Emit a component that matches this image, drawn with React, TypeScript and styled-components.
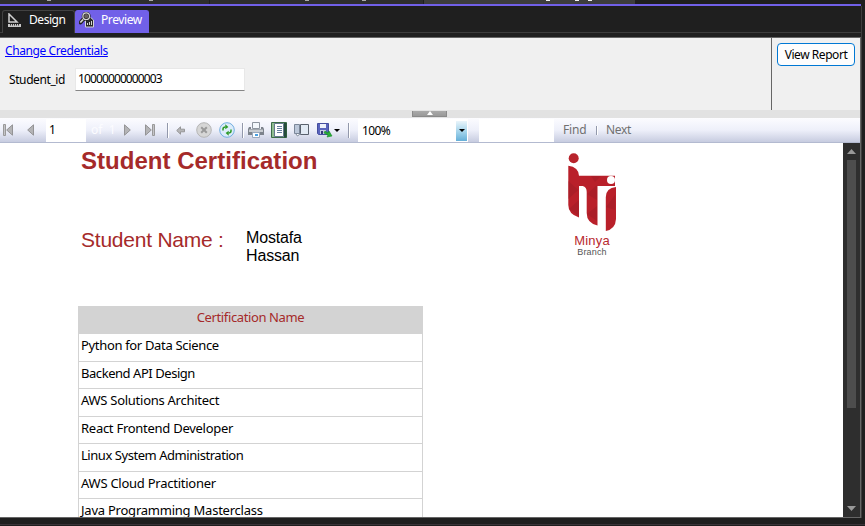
import React from "react";
import styled, { createGlobalStyle } from "styled-components";

const Global = createGlobalStyle`
  *{box-sizing:border-box}
  body{margin:0;background:#1f1f1f;overflow:hidden}
`;
const ui = '"Noto Sans", "Open Sans", sans-serif';
const report = '"Liberation Sans", Arial, sans-serif';

const Window = styled.div`
  width:865px;height:526px;display:flex;flex-direction:column;overflow:hidden;
  background:#1f1f1f;font:12px/16px ${ui};color:#000;
`;
const DocTabs = styled.div`height:4px;display:flex;gap:1px;background:#1f1f1f;flex:none;`;
const DocTab = styled.div<{ $w: number; $active?: boolean }>`
  width:${p => p.$w}px;height:4px;display:flex;background:${p => (p.$active ? "#3d3d3d" : "#2e2e2e")};
`;
const Descender = styled.i<{ $gap: number; $bright?: boolean }>`
  width:4px;height:1px;margin-left:${p => p.$gap}px;background:${p => (p.$bright ? "#f0f0f0" : "#aaa")};
`;
const Accent = styled.div`width:861px;height:2px;background:#7160e8;flex:none;`;
const Designer = styled.div`
  width:862px;height:512px;border-right:1px solid #3d3d3d;display:flex;flex-direction:column;flex:none;
`;
const ViewTabs = styled.div`
  height:27px;padding:4px 0 0 2px;display:flex;border-bottom:1px solid #3d3d3d;flex:none;
`;
const ViewTab = styled.div<{ $w: number; $active?: boolean }>`
  width:${p => p.$w}px;height:23px;display:flex;align-items:flex-start;padding:${p => (p.$active ? "1px 0 0 4px" : "2px 0 0 5px")};
  border:1px solid ${p => (p.$active ? "#7160e8" : "#424242")};border-bottom:0;border-left-width:${p => (p.$active ? 0 : 1)}px;
  border-radius:3px 3px 0 0;background:${p => (p.$active ? "#7160e8" : "#1f1f1f")};color:#fff;
`;
const Label = styled.span<{ $ml?: number; $mt?: number; $ls?: number; $c?: string }>`
  white-space:pre;margin-left:${p => p.$ml || 0}px;margin-top:${p => p.$mt || 0}px;
  letter-spacing:${p => p.$ls || 0}px;color:${p => p.$c || "inherit"};
`;
const Viewer = styled.div`
  margin-top:4px;width:861px;height:481px;border:1px solid #666;border-left:0;display:flex;flex-direction:column;background:#fff;flex:none;
`;
const Params = styled.div`height:72px;display:flex;background:#f0f0f0;flex:none;`;
const Fields = styled.div`width:772px;border-right:1px solid #666;padding:5px 0 0 5px;`;
const Credentials = styled.a`display:block;width:max-content;height:16px;color:#00f;text-decoration:underline;letter-spacing:-.4px;text-underline-offset:1px;`;
const Field = styled.div`display:flex;margin-top:9px;padding-left:4px;`;
const FieldName = styled.span`width:66px;padding-top:4px;letter-spacing:-.4px;`;
const Input = styled.div`
  width:170px;height:23px;background:#fff;border:1px solid #e8e8e8;border-bottom-color:#868686;padding:2px 0 0 2px;letter-spacing:-.88px;
`;
const Run = styled.div`padding:5px;`;
const Button = styled.button`
  width:78px;height:23px;padding:0;border:1px solid #0078d4;border-radius:4px;background:#fdfdfd;
  font:12px/18px ${ui};letter-spacing:-.45px;white-space:nowrap;color:#000;
`;
const Splitter = styled.div`height:8px;background:#e2e2e2;padding:1px 0 0 412px;flex:none;`;
const Grip = styled.div`
  width:35px;height:6px;background:linear-gradient(#aaa,#999);border:solid #8a8a8a;border-width:0 1px 1px;display:flex;justify-content:center;
`;
const Toolbar = styled.div`
  height:25px;display:flex;align-items:center;flex:none;border-bottom:1px solid #b3bad0;
  background:linear-gradient(#fcfcff 0%,#eef0fa 50%,#c7cce0 100%);
`;
const Slot = styled.div<{ $w: number; $gap?: number }>`
  width:${p => p.$w}px;margin-left:${p => p.$gap || 0}px;flex:none;display:flex;white-space:pre;
`;
const Box = styled(Slot)`height:23px;background:#fff;padding:3px 0 0 3px;`;
const Divider = styled.i<{ $gap: number; $h?: number }>`
  width:2px;height:${p => p.$h || 15}px;margin-left:${p => p.$gap}px;background:linear-gradient(90deg,#9298ab 50%,#fff 50%);flex:none;
`;
const Combo = styled(Slot)`height:23px;background:#fff;padding:4px 1px 1px 4px;justify-content:space-between;`;
const Drop = styled.div`
  width:11px;height:20px;margin-top:-2px;background:linear-gradient(#eaf5fb,#9bcfe9 60%,#65afd8);display:flex;align-items:center;justify-content:center;
`;
const Body = styled.div`display:flex;flex:1;min-height:0;`;
const Page = styled.div`width:843px;height:374px;overflow:hidden;background:#fff;padding-left:78px;`;
const Head = styled.div`height:163px;display:flex;justify-content:space-between;padding:0 224px 0 3px;`;
const Titles = styled.div`font-family:${report};color:#a52a2a;`;
const Title = styled.h1`margin:4px 0 0;font-size:24px;line-height:28px;white-space:nowrap;letter-spacing:.02px;`;
const Student = styled.div`display:flex;margin-top:52px;font-size:21px;line-height:26px;`;
const StudentLabel = styled.span`width:165px;letter-spacing:-.23px;white-space:nowrap;`;
const StudentName = styled.span`width:80px;font-size:16px;line-height:18px;letter-spacing:-.15px;color:#000;padding-top:2px;`;
const Brand = styled.div`width:54px;display:flex;flex-direction:column;align-items:center;padding-top:9px;`;
const BrandName = styled.div`font:13px/13px ${report};letter-spacing:.2px;color:#b8292f;margin-top:2px;`;
const BrandSub = styled.div`font:9px/11px ${report};letter-spacing:.15px;color:#555;`;
const Table = styled.div`width:345px;border:1px solid #d3d3d3;border-top:0;font-size:13px;`;
const TableHead = styled.div`
  height:28px;background:#d3d3d3;color:#a52a2a;text-align:center;padding-top:2px;line-height:18px;letter-spacing:-.38px;
`;
const Row = styled.div<{ $h: number; $ls: number }>`
  height:${p => p.$h}px;border-bottom:1px solid #d3d3d3;padding:2px 0 0 2px;line-height:18px;letter-spacing:${p => p.$ls}px;white-space:nowrap;
`;
const Scroll = styled.div`
  width:17px;background:#2e2e2e;display:flex;flex-direction:column;align-items:center;flex:none;padding:6px 0;
`;
const Thumb = styled.div`width:9px;height:248px;background:#4d4d4d;margin-top:6px;`;
const Spacer = styled.div`flex:1;`;
const StatusLine = styled.div`height:1px;margin-top:6px;background:#3a3338;flex:none;`;

const Tri = ({ dir, fill = "#999", w, h }: { dir: "l" | "r" | "u" | "d"; fill?: string; w: number; h: number }) => {
  const points = {
    l: `${w},0 0,${h / 2} ${w},${h}`, r: `0,0 ${w},${h / 2} 0,${h}`,
    u: `0,${h} ${w / 2},0 ${w},${h}`, d: `0,0 ${w},0 ${w / 2},${h}`,
  }[dir];
  return <svg width={w} height={h}><polygon points={points} fill={fill} /></svg>;
};

const NavIcon = ({ flip, bar }: { flip?: boolean; bar?: boolean }) => (
  <svg width={bar ? 10 : 7} height="12" viewBox={bar ? "0 0 10 12" : "3 0 7 12"}>
    <g transform={flip ? (bar ? "translate(10 0) scale(-1 1)" : "translate(13 0) scale(-1 1)") : undefined}>
      {bar && <path d="M.5.5h2v11h-2z" fill="#c4c4c8" stroke="#999" />}
      <path d="M9.5.8v10.4L3.7 6z" fill="#b4b4b6" stroke="#949496" />
    </g>
  </svg>
);
const DesignIcon = () => (
  <svg width="13" height="15" viewBox="0 0 13 15" fill="none">
    <path d="M1 1v8h8z" stroke="#d0d0d0" strokeWidth="1.5" />
    <path d="M3 5.5v2h2z" fill="#1f1f1f" />
    <path d="M0 11h13v3H0z" fill="#c8c8c8" />
    <path d="M2.5 11v1.5m2-1.5v1.5m2-1.5v1.5m2-1.5v1.5m2-1.5v1.5" stroke="#333" />
  </svg>
);
const PreviewIcon = () => (
  <svg width="16" height="16" viewBox="0 0 16 16" fill="none">
    <path d="M6.5 5.5h5.2L14.5 8v7h-8z" fill="#292929" stroke="#d4d4d4" />
    <path d="M8.5 13v-2m2 2v-3m2 3V9" stroke="#d4d4d4" />
    <path d="M5 6.5 1.5 10.5" stroke="#222" strokeWidth="4" strokeLinecap="round" />
    <path d="M5 6.5 1.3 10.5" stroke="#d4d4d4" strokeWidth="1.8" />
    <circle cx="7.2" cy="4.2" r="3.3" fill="#68615e" stroke="#222" strokeWidth="2.4" />
    <circle cx="7.2" cy="4.2" r="3.3" stroke="#d4d4d4" strokeWidth="1.2" />
  </svg>
);
const BackIcon = () => (
  <svg width="9" height="9"><path d="M.7 4.5 4.5.8v2.4h4v2.6h-4v2.4z" fill="#b5b5b7" stroke="#969698" /></svg>
);
const StopIcon = () => (
  <svg width="16" height="16" fill="none">
    <circle cx="8" cy="8" r="7.3" fill="#d6d6d6" stroke="#b5b5b5" />
    <path d="m5.2 5.2 5.6 5.6m0-5.6-5.6 5.6" stroke="#999" strokeWidth="2" />
  </svg>
);
const RefreshIcon = () => (
  <svg width="16" height="16" fill="none">
    <circle cx="8" cy="8" r="7.3" fill="#dcecfa" stroke="#72aee0" />
    <path d="M4 8.5V7Q4 5 6.5 5M12 7.5V9Q12 11 9.5 11" stroke="#2d9a27" strokeWidth="1.5" />
    <path d="M6.3 2.3v5L9.4 5zM9.7 8.7v5L6.6 11z" fill="#2d9a27" />
  </svg>
);
const PrintIcon = () => (
  <svg width="16" height="16">
    <path d="M4.5.5h7v6h-7z" fill="#f3f7fc" stroke="#8d949f" />
    <path d="M1 5h2v2h10V5h2l1 2v6H0V7z" fill="#7d838c" />
    <path d="M1 7.5h14V10H1z" fill="#c9cdd2" />
    <path d="M4.5 10.5h7v5h-7z" fill="#fff" stroke="#9baabd" />
    <path d="M7 12h3v2H7z" fill="#4a9fe0" />
  </svg>
);
const LayoutIcon = () => (
  <svg width="16" height="16">
    <path d="M.5.5h15v15H.5z" fill="#8fbd90" stroke="#3b6c47" />
    <path d="M13 1h2.5v14.5H13z" fill="#244c39" />
    <path d="M3.5 1.5h9v13h-9z" fill="#fff" stroke="#65798d" />
    <path d="M6 4.5h5m-5 2h5m-5 2h5m-5 2h5" stroke="#66809e" />
  </svg>
);
const SetupIcon = () => (
  <svg width="16" height="14">
    <path d="M.5 1.5h5v9h-5z" fill="#bcc8da" stroke="#7b8798" />
    <path d="M6.5 1.5h8v10h-8z" fill="#e2eaf4" stroke="#59616d" />
    <path d="m1.5 10.5 2 2.5 3-2.5z" fill="#fff" stroke="#7b8798" />
  </svg>
);
const SaveIcon = () => (
  <svg width="16" height="16">
    <path d="M.5 1.5h11v11h-10l-1-1z" fill="#5964bd" stroke="#454e9e" />
    <path d="M3 2h6v4H3z" fill="#edf1fb" />
    <path d="M3 8h6v4H3z" fill="#c5cae2" /><path d="M4 9h2v3H4z" fill="#313978" />
    <path d="m8 9 3 2 1-2 3 5-5 1 1-2-4-2z" fill="#29ae35" stroke="#168b28" strokeWidth=".6" />
  </svg>
);
const Logo = () => (
  <svg width="50" height="80" viewBox="0 0 50 80">
    <circle cx="6.7" cy="6.3" r="5" fill="#b8242c" />
    <path d="M1.3 13.7Q11.5 15 12 23.7h36V34H30.5v39.5Q19.7 71 19.7 61V40q0-5-4-6H12v31.5Q1.3 62 1.3 53z" fill="#b9202a" />
    <path d="M38.8 79V45Q39 36 49 35v32Q48.5 77 38.8 79z" fill="#b9202a" />
    <path d="m1.3 29 10 9-10 9zM12 48 2 57l10 7zM20 42l10-9v15zM20 62l10-8v15zM39 55l9-12v15zM24 24h10l-6 6z" fill="#951b25" opacity=".4" />
    <circle cx="44" cy="28" r="4" fill="#fff" />
  </svg>
);

const rows = [
  { name: "Python for Data Science", h: 28, ls: -0.33 },
  { name: "Backend API Design", h: 27, ls: -0.45 },
  { name: "AWS Solutions Architect", h: 28, ls: -0.27 },
  { name: "React Frontend Developer", h: 27, ls: -0.27 },
  { name: "Linux System Administration", h: 28, ls: -0.45 },
  { name: "AWS Cloud Practitioner", h: 27, ls: -0.25 },
  { name: "Java Programming Masterclass", h: 28, ls: -0.23 },
];

export default function App() {
  return (
    <Window>
      <Global />
      <DocTabs>
        <DocTab $w={209}><Descender $gap={47} /><Descender $gap={98} /></DocTab>
        <DocTab $w={213}><Descender $gap={95} /><Descender $gap={53} /></DocTab>
        <DocTab $w={211} $active><Descender $gap={122} $bright /><Descender $gap={25} $bright /><Descender $gap={9} $bright /></DocTab>
      </DocTabs>
      <Accent />
      <Designer>
        <ViewTabs>
          <ViewTab $w={73}><DesignIcon /><Label $ml={8} $mt={-1} $ls={-0.45}>Design</Label></ViewTab>
          <ViewTab $w={74} $active><PreviewIcon /><Label $ml={6} $ls={-0.4}>Preview</Label></ViewTab>
        </ViewTabs>
        <Viewer>
          <Params>
            <Fields>
              <Credentials>Change Credentials</Credentials>
              <Field><FieldName>Student_id</FieldName><Input>10000000000003</Input></Field>
            </Fields>
            <Run><Button>View Report</Button></Run>
          </Params>
          <Splitter><Grip><Tri dir="u" w={6} h={4} fill="#fff" /></Grip></Splitter>
          <Toolbar>
            <Slot $w={10} $gap={3}><NavIcon bar /></Slot>
            <Slot $w={7} $gap={14}><NavIcon /></Slot>
            <Box $w={40} $gap={12}>1</Box>
            <Slot $w={24} $gap={5}><Label $c="#fcfcff">of  1</Label></Slot>
            <Slot $w={7} $gap={9}><NavIcon flip /></Slot>
            <Slot $w={10} $gap={14}><NavIcon flip bar /></Slot>
            <Divider $gap={12} />
            <Slot $w={9} $gap={7}><BackIcon /></Slot>
            <Slot $w={16} $gap={11}><StopIcon /></Slot>
            <Slot $w={16} $gap={7}><RefreshIcon /></Slot>
            <Divider $gap={7} />
            <Slot $w={16} $gap={4}><PrintIcon /></Slot>
            <Slot $w={16} $gap={7}><LayoutIcon /></Slot>
            <Slot $w={16} $gap={7}><SetupIcon /></Slot>
            <Slot $w={16} $gap={7}><SaveIcon /></Slot>
            <Slot $w={6} $gap={1}><Tri dir="d" w={6} h={3} fill="#000" /></Slot>
            <Divider $gap={8} />
            <Combo $w={110} $gap={8}><Label $ls={-0.6}>100%</Label><Drop><Tri dir="d" w={6} h={3} fill="#000" /></Drop></Combo>
            <Box $w={75} $gap={11} />
            <Slot $w={24} $gap={9}><Label $c="#707070" $ls={-0.2}>Find</Label></Slot>
            <Divider $gap={9} $h={9} />
            <Slot $w={28} $gap={8}><Label $c="#707070" $ls={-0.3}>Next</Label></Slot>
          </Toolbar>
          <Body>
            <Page>
              <Head>
                <Titles>
                  <Title>Student Certification</Title>
                  <Student><StudentLabel>Student Name :</StudentLabel><StudentName>Mostafa Hassan</StudentName></Student>
                </Titles>
                <Brand><Logo /><BrandName>Minya</BrandName><BrandSub>Branch</BrandSub></Brand>
              </Head>
              <Table>
                <TableHead>Certification Name</TableHead>
                {rows.map(r => <Row key={r.name} $h={r.h} $ls={r.ls}>{r.name}</Row>)}
              </Table>
            </Page>
            <Scroll><Tri dir="u" w={9} h={5} /><Thumb /><Spacer /><Tri dir="d" w={9} h={5} /></Scroll>
          </Body>
        </Viewer>
      </Designer>
      <StatusLine />
    </Window>
  );
}
